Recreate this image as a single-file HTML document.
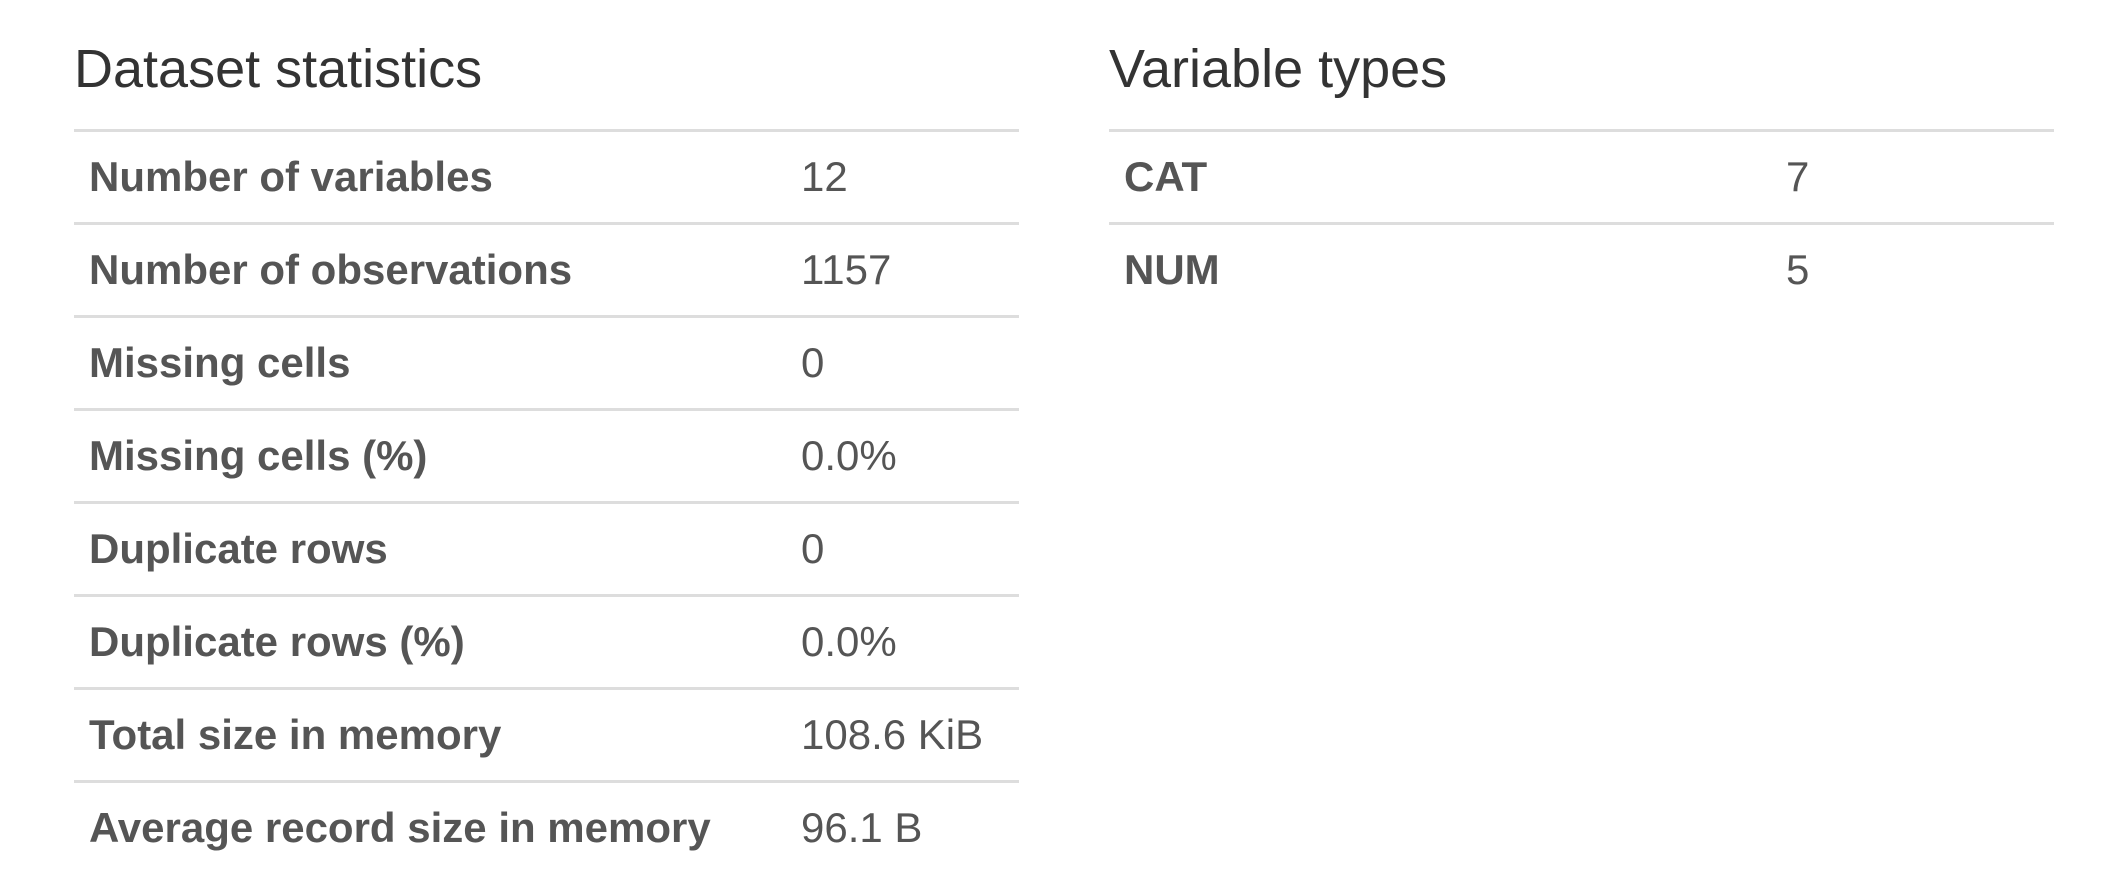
<!DOCTYPE html>
<html><head><meta charset="utf-8"><style>
body{margin:0;background:#fff;width:2110px;height:885px;overflow:hidden;font-family:"Liberation Sans",Arial,sans-serif;position:relative}
h2{position:absolute;margin:0;font-weight:normal;font-size:54px;color:#333;top:38px;line-height:62px}
.t{position:absolute;top:129px;border-collapse:collapse}
.t td{height:90px;border-top:3px solid #ddd;font-size:42px;color:#555;padding:0;vertical-align:middle}
.t td.l{font-weight:bold;padding-left:15px}
</style></head><body>
<h2 style="left:74px">Dataset statistics</h2>
<h2 style="left:1109px">Variable types</h2>
<table class="t" style="left:74px;width:945px">
<colgroup><col style="width:727px"><col></colgroup>
<tr><td class="l">Number of variables</td><td>12</td></tr>
<tr><td class="l">Number of observations</td><td>1157</td></tr>
<tr><td class="l">Missing cells</td><td>0</td></tr>
<tr><td class="l">Missing cells (%)</td><td>0.0%</td></tr>
<tr><td class="l">Duplicate rows</td><td>0</td></tr>
<tr><td class="l">Duplicate rows (%)</td><td>0.0%</td></tr>
<tr><td class="l">Total size in memory</td><td>108.6 KiB</td></tr>
<tr><td class="l">Average record size in memory</td><td>96.1 B</td></tr>
</table>
<table class="t" style="left:1109px;width:945px">
<colgroup><col style="width:677px"><col></colgroup>
<tr><td class="l">CAT</td><td>7</td></tr>
<tr><td class="l">NUM</td><td>5</td></tr>
</table>
</body></html>
